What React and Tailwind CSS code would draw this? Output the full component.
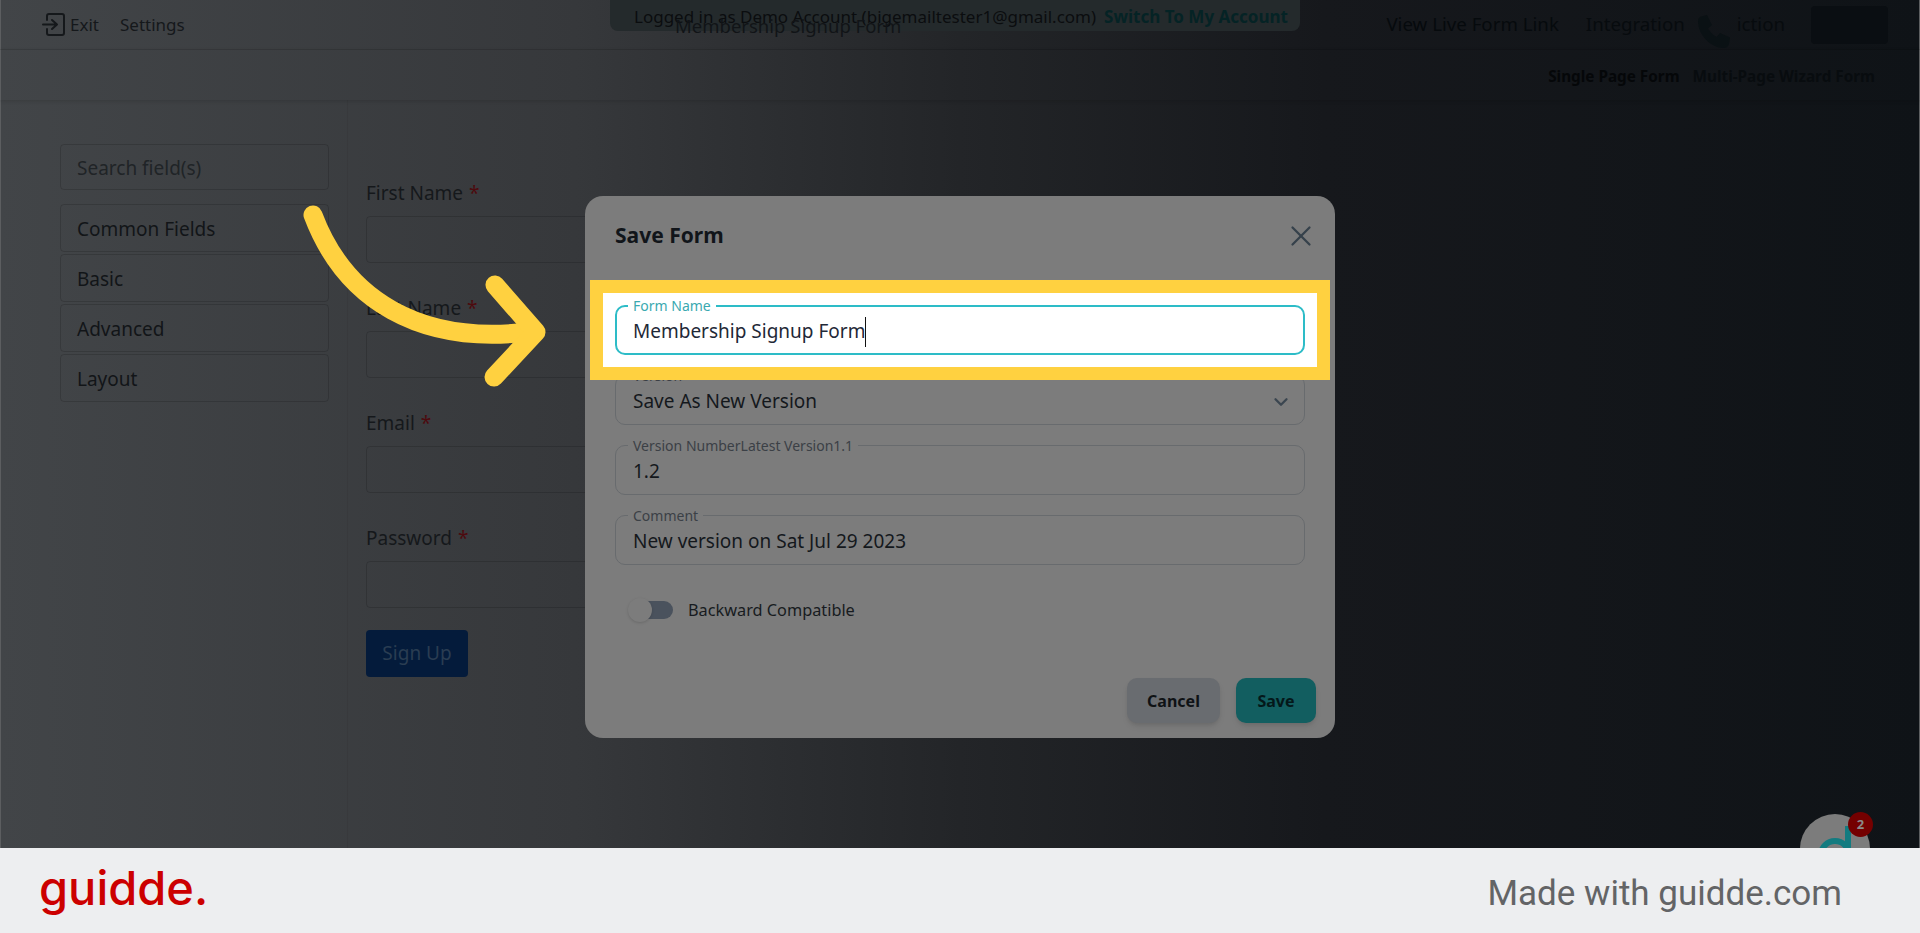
import { ChevronDown, X } from 'lucide-react';

const sidebarItems = ['Common Fields', 'Basic', 'Advanced', 'Layout'];
const formFields = ['First Name', 'Last Name', 'Email', 'Password'];

const ExitIcon = () => (
  <svg width="23" height="23" viewBox="0 0 23 23" fill="none" stroke="#15181b" strokeWidth="2" strokeLinecap="round" strokeLinejoin="round">
    <path d="M5 7V3a2 2 0 0 1 2-2h13a2 2 0 0 1 2 2v17a2 2 0 0 1-2 2H7a2 2 0 0 1-2-2v-4" />
    <path d="M1 11.5h13M10 7l5 4.5-5 4.5" />
  </svg>
);

const PhoneIcon = () => (
  <svg width="34" height="33" viewBox="0 0 34 33" fill="#0a1114">
    <path d="M4 1.5 10 0l5 10-4 3.5c2 3.5 5 6.5 8.5 8.5l3.5-4 10 4.5-1 6.5c-.4 2-2.5 4-5 4C14 33 1 20 1 6c0-2 1-4 3-4.5z" />
  </svg>
);

const TopBar = () => (
  <header className="relative flex h-[50px] items-center border-b border-black/10 text-[17px] text-[#15181b]">
    <div className="flex w-[675px] items-center pl-[42px]">
      <ExitIcon />
      <span className="ml-[5px]">Exit</span>
      <span className="ml-[21px]">Settings</span>
    </div>
    <span className="mt-[3px] text-[18.5px] text-[#111417]">Membership Signup Form</span>
    <div className="ml-auto flex items-center pr-[32px] text-[18.7px] text-[#060a0d]">
      <span>View Live Form Link</span>
      <span className="ml-[27px] text-[#070b0e]">Integration</span>
      <span className="ml-[12px] mt-[14px]"><PhoneIcon /></span>
      <span className="ml-[6px] text-[#070b0e]">iction</span>
      <div className="ml-[26px] h-[38px] w-[77px] rounded bg-[#0a0e12]" />
    </div>
  </header>
);

const SubBar = () => (
  <div className="flex h-[50px] items-center justify-end pr-[45px] shadow-[0_1px_4px_rgba(0,0,0,0.15)]">
    <div className="mt-[2px] flex items-center text-[15.3px] font-bold">
      <span className="text-[#050709]">Single Page Form</span>
      <span className="ml-[13px] text-[#080c0f]">Multi-Page Wizard Form</span>
    </div>
  </div>
);

const Sidebar = () => (
  <aside className="flex w-[348px] shrink-0 flex-col border-r border-black/5 pl-[60px] pr-[18px] pt-[44px]">
    <div className="flex h-[46px] items-center rounded border border-black/15 pl-[16px] pt-[2px] text-[19px] text-[#202427]">Search field(s)</div>
    <div className="mt-[14px] flex flex-col gap-0.5">
      {sidebarItems.map((item) => (
        <div key={item} className="flex h-[48px] items-center rounded border border-black/15 pl-[16px] pt-[2px] text-[19px] text-[#121518]">
          {item}
        </div>
      ))}
    </div>
  </aside>
);

const SignupForm = () => (
  <div className="flex flex-1 flex-col items-start pl-[18px] pt-[81px]">
    <div className="flex flex-col gap-[33px]">
      {formFields.map((field) => (
        <div key={field}>
          <label className="flex h-[24px] items-center text-[19px] text-[#15181b]">
            {field}<span className="ml-[6px] text-[#4d0a0e]">*</span>
          </label>
          <div className="mt-[11px] h-[47px] w-[500px] rounded border border-black/15" />
        </div>
      ))}
    </div>
    <button className="mt-[22px] h-[47px] w-[102px] rounded bg-[#041b3b] text-[19px] text-[#2a3d52]">Sign Up</button>
  </div>
);

const Field = ({ label, children }) => (
  <div className="relative flex h-[50px] items-center justify-between rounded-[10px] border border-[#686b6e] pl-[17px] pr-[12px] pt-[3px] text-[19px] text-[#14181c]">
    <span className="absolute left-[12px] top-[-8px] bg-[#7c7c7c] px-[5px] text-[14px] leading-[16px] text-[#3b4046]">{label}</span>
    {children}
  </div>
);

const SaveFormModal = () => (
  <div className="absolute left-[585px] top-[196px] flex h-[542px] w-[750px] flex-col rounded-[18px] bg-[#7c7c7c] px-[30px]">
    <div className="flex h-[80px] items-center justify-between">
      <h2 className="text-[21px] font-bold text-[#11151a]">Save Form</h2>
      <X size={34} strokeWidth={1.6} className="mr-[-13px] text-[#35414b]" />
    </div>
    <div className="mt-[29px] flex flex-col gap-5">
      <div className="relative z-10 h-[50px]">
        <div className="absolute -inset-[25px] border-[13px] border-[#ffd140] bg-white" />
        <div className="relative flex h-[50px] items-center rounded-[10px] border-2 border-[#2dbcc7] pl-[16px] pt-[3px] text-[19px] text-[#1f2937]">
          <span className="absolute left-[11px] top-[-9px] bg-white px-[5px] text-[14px] leading-[16px] text-[#3aa9b0]">Form Name</span>
          Membership Signup Form
          <span className="h-[30px] w-px bg-[#111]" />
        </div>
      </div>
      <Field label="Version">
        Save As New Version
        <ChevronDown size={22} strokeWidth={2.5} className="text-[#3b4650]" />
      </Field>
      <Field label="Version NumberLatest Version1.1">1.2</Field>
      <Field label="Comment">New version on Sat Jul 29 2023</Field>
    </div>
    <div className="mt-[33px] flex items-center pl-[13px]">
      <div className="relative h-[24px] w-[45px]">
        <div className="absolute bottom-[3px] right-0 top-[3px] w-[26px] rounded-r-full bg-[#4a525d]" />
        <div className="absolute left-0 top-0 h-[24px] w-[24px] rounded-full bg-[#7c7c7c] shadow-[0_1px_3px_rgba(0,0,0,0.15)]" />
      </div>
      <span className="ml-[15px] text-[16.3px] text-[#171b20]">Backward Compatible</span>
    </div>
    <div className="mt-[56px] flex justify-end gap-4">
      <button className="h-[45px] w-[93px] rounded-[10px] bg-[#696c70] text-[16px] font-bold text-[#0f1215] shadow-md">Cancel</button>
      <button className="mr-[-11px] h-[45px] w-[80px] rounded-[10px] bg-[#125e60] text-[16px] font-bold text-[#04181a] shadow-md">Save</button>
    </div>
  </div>
);

const GuideArrow = () => (
  <svg className="absolute left-0 top-0" width="640" height="420" fill="none" stroke="#ffd140" strokeWidth="19" strokeLinecap="round" strokeLinejoin="round">
    <path d="M313 215C345 300 420 345 528 332" />
    <path d="M495 285l41 47-42 45" />
  </svg>
);

const ChatWidget = () => (
  <div className="absolute left-[1800px] top-[814px] h-[70px] w-[70px] rounded-full bg-[#7c7c7c]">
    <svg className="absolute left-0 top-0" width="70" height="70" fill="none" stroke="#137b80" strokeWidth="6">
      <circle cx="35" cy="41" r="14" />
      <path d="M48 12v40" />
    </svg>
    <span className="absolute left-[48px] top-[-2px] flex h-[25px] w-[25px] items-center justify-center rounded-full bg-[#740000] text-[13px] font-bold text-[#8a8a8a]">2</span>
  </div>
);

const App = () => (
  <div className="flex h-screen w-full flex-col overflow-hidden font-['Noto_Sans',sans-serif]">
    <main className="relative h-[848px] overflow-hidden bg-[linear-gradient(90deg,#424548_0%,#36383b_30%,#232528_50%,#16181c_69%,#0f1317_100%)] shadow-[inset_1px_0_0_#5c5e60,inset_-1px_0_0_#5c5e60]">
      <div className="absolute left-[610px] top-0 flex h-[31px] w-[690px] items-center rounded-b-lg bg-[#242a2c] pl-[24px] pt-[3px] text-[17px] text-[#0b0d0f]">
        Logged in as Demo Account (bigemailtester1@gmail.com)
        <span className="ml-[8px] font-bold text-[#052325]">Switch To My Account</span>
      </div>
      <TopBar />
      <SubBar />
      <div className="flex h-[748px]">
        <Sidebar />
        <SignupForm />
      </div>
      <ChatWidget />
      <SaveFormModal />
      <GuideArrow />
    </main>
    <footer className="flex h-[85px] items-center justify-between bg-[#edeef0] pl-[39px] pr-[78px]">
      <span className="mb-[6px] font-['Inter',sans-serif] text-[47px] font-medium leading-none text-[#cc0000]">guidde.</span>
      <span className="mt-[8px] font-['Roboto',sans-serif] text-[35px] text-[#636466]">Made with guidde.com</span>
    </footer>
  </div>
);

export default App;
